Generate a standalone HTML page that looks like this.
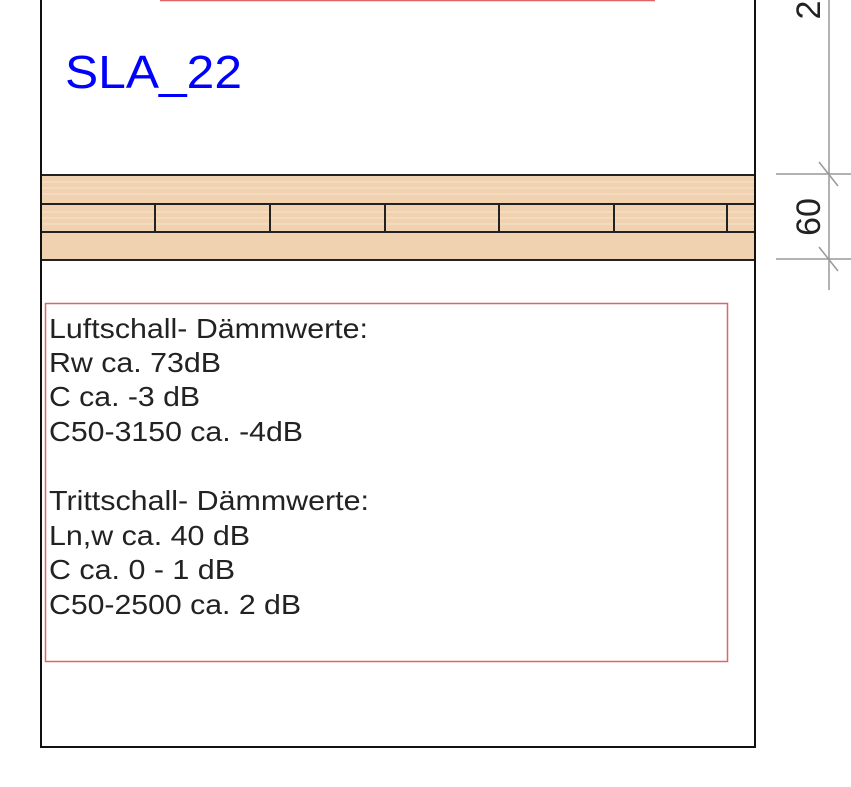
<!DOCTYPE html>
<html><head><meta charset="utf-8"><style>html,body{margin:0;padding:0;background:#fff;}svg{display:block}</style></head>
<body>
<svg width="851" height="787" viewBox="0 0 851 787" xmlns="http://www.w3.org/2000/svg" font-family="Liberation Sans, sans-serif">
<rect width="851" height="787" fill="#fff"/>
<line x1="160" y1="0.5" x2="655" y2="0.5" stroke="#d66" stroke-width="1.5"/>
<text x="65" y="88" font-size="46" fill="#0000ff" textLength="177" lengthAdjust="spacingAndGlyphs">SLA_22</text>
<rect x="40" y="174" width="715" height="86" fill="#f0d2b0"/>
<g stroke="#f8e4cc" stroke-width="1">
<line x1="40" y1="182" x2="755" y2="182"/><line x1="40" y1="188" x2="755" y2="188"/><line x1="40" y1="194" x2="755" y2="194"/>
<line x1="40" y1="212" x2="755" y2="212"/><line x1="40" y1="218" x2="755" y2="218"/><line x1="40" y1="224" x2="755" y2="224"/>
</g>
<g stroke="#222" stroke-width="2">
<line x1="40" y1="175" x2="755" y2="175"/>
<line x1="40" y1="204" x2="755" y2="204"/>
<line x1="40" y1="232" x2="755" y2="232"/>
<line x1="40" y1="260" x2="755" y2="260"/>
<line x1="155" y1="204" x2="155" y2="232"/><line x1="270" y1="204" x2="270" y2="232"/>
<line x1="385" y1="204" x2="385" y2="232"/><line x1="499" y1="204" x2="499" y2="232"/>
<line x1="614" y1="204" x2="614" y2="232"/><line x1="727" y1="204" x2="727" y2="232"/>
</g>
<path d="M41 0 V747 H755 V0" fill="none" stroke="#111" stroke-width="2"/>
<g stroke="#999" stroke-width="1.5">
<line x1="829" y1="0" x2="829" y2="290"/>
<line x1="776" y1="174" x2="851" y2="174"/>
<line x1="776" y1="259" x2="851" y2="259"/>
<line x1="819" y1="162" x2="838" y2="186"/>
<line x1="819" y1="247" x2="838" y2="271"/>
</g>
<text transform="translate(820,217) rotate(-90)" font-size="34" fill="#222" text-anchor="middle">60</text>
<text transform="translate(820,10) rotate(-90)" font-size="34" fill="#222" text-anchor="middle">2</text>
<rect x="45.5" y="303.5" width="682" height="358" fill="none" stroke="#d66" stroke-width="1.5"/>
<g font-size="28" fill="#222">
<text x="49" y="338" textLength="319" lengthAdjust="spacingAndGlyphs">Luftschall- Dämmwerte:</text>
<text x="49" y="372" textLength="172" lengthAdjust="spacingAndGlyphs">Rw ca. 73dB</text>
<text x="49" y="406" textLength="151" lengthAdjust="spacingAndGlyphs">C ca. -3 dB</text>
<text x="49" y="441" textLength="254" lengthAdjust="spacingAndGlyphs">C50-3150 ca. -4dB</text>
<text x="49" y="510" textLength="320" lengthAdjust="spacingAndGlyphs">Trittschall- Dämmwerte:</text>
<text x="49" y="545" textLength="201" lengthAdjust="spacingAndGlyphs">Ln,w ca. 40 dB</text>
<text x="49" y="579" textLength="186" lengthAdjust="spacingAndGlyphs">C ca. 0 - 1 dB</text>
<text x="49" y="614" textLength="252" lengthAdjust="spacingAndGlyphs">C50-2500 ca. 2 dB</text>
</g>
</svg>
</body></html>
